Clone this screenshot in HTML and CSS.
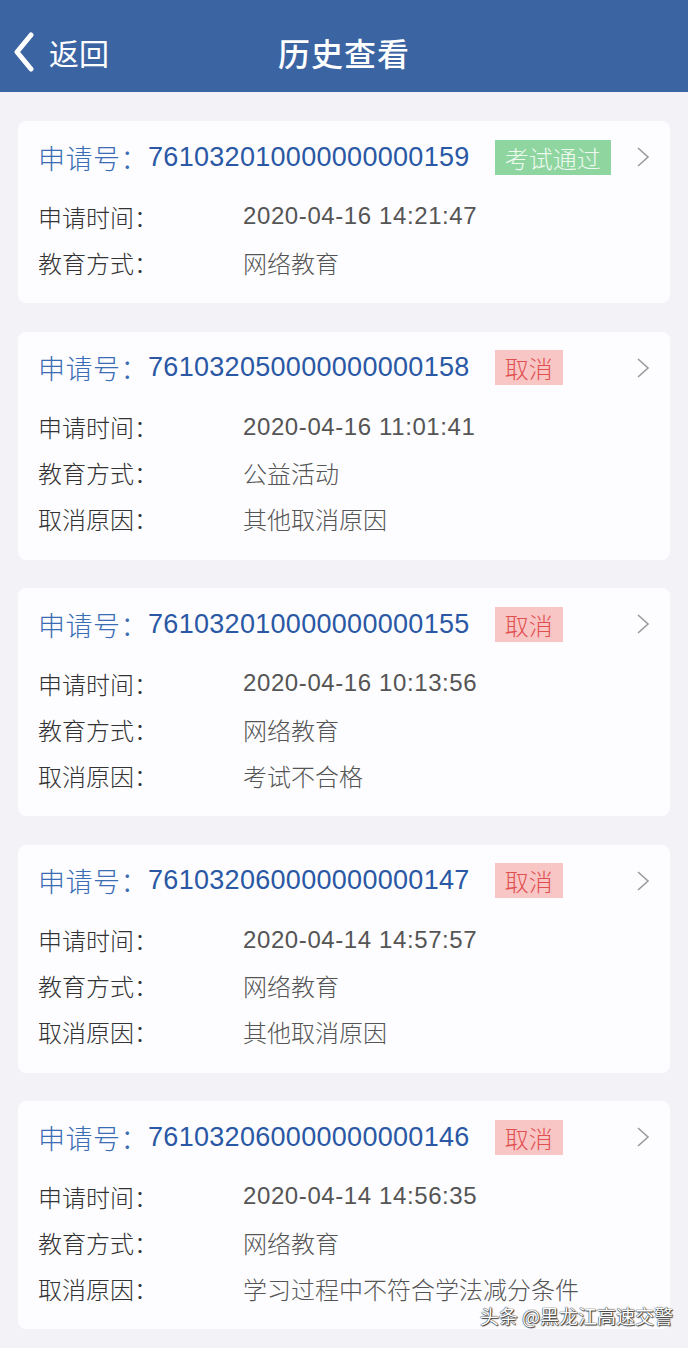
FILE: index.html
```html
<!DOCTYPE html>
<html>
<head>
    <meta charset="utf-8">
    <link rel="stylesheet" href="styles.css">
</head>
<body>
    <!-- Top bar -->
    <div class="topbar">
        <div class="back">
            <svg class="back-icon" width="22" height="40" viewBox="0 0 22 40">
                <polyline points="18,3 4,20 18,37" fill="none" stroke="#fff" stroke-width="5" stroke-linecap="round" stroke-linejoin="round" />
            </svg>
            <span>返回</span>
        </div>
        <div class="title">历史查看</div>
        <div></div>
    </div>

    <div class="list">
        <div class="card">
            <div class="card-head">
                <span class="label-no">申请号：</span><span class="number">761032010000000000159</span>
                <span class="badge pass">考试通过</span>
                <svg class="arrow" width="16" height="22" viewBox="0 0 16 22"><polyline points="3,2 13,11 3,20" fill="none" stroke="#9a9a9a" stroke-width="1.6" /></svg>
            </div>
            <div class="rows">
                <span class="key">申请时间：</span><span class="val num">2020-04-16 14:21:47</span>
                <span class="key">教育方式：</span><span class="val">网络教育</span>
            </div>
        </div>

        <div class="card">
            <div class="card-head">
                <span class="label-no">申请号：</span><span class="number">761032050000000000158</span>
                <span class="badge cancel">取消</span>
                <svg class="arrow" width="16" height="22" viewBox="0 0 16 22"><polyline points="3,2 13,11 3,20" fill="none" stroke="#9a9a9a" stroke-width="1.6" /></svg>
            </div>
            <div class="rows">
                <span class="key">申请时间：</span><span class="val num">2020-04-16 11:01:41</span>
                <span class="key">教育方式：</span><span class="val">公益活动</span>
                <span class="key">取消原因：</span><span class="val">其他取消原因</span>
            </div>
        </div>

        <div class="card">
            <div class="card-head">
                <span class="label-no">申请号：</span><span class="number">761032010000000000155</span>
                <span class="badge cancel">取消</span>
                <svg class="arrow" width="16" height="22" viewBox="0 0 16 22"><polyline points="3,2 13,11 3,20" fill="none" stroke="#9a9a9a" stroke-width="1.6" /></svg>
            </div>
            <div class="rows">
                <span class="key">申请时间：</span><span class="val num">2020-04-16 10:13:56</span>
                <span class="key">教育方式：</span><span class="val">网络教育</span>
                <span class="key">取消原因：</span><span class="val">考试不合格</span>
            </div>
        </div>

        <div class="card">
            <div class="card-head">
                <span class="label-no">申请号：</span><span class="number">761032060000000000147</span>
                <span class="badge cancel">取消</span>
                <svg class="arrow" width="16" height="22" viewBox="0 0 16 22"><polyline points="3,2 13,11 3,20" fill="none" stroke="#9a9a9a" stroke-width="1.6" /></svg>
            </div>
            <div class="rows">
                <span class="key">申请时间：</span><span class="val num">2020-04-14 14:57:57</span>
                <span class="key">教育方式：</span><span class="val">网络教育</span>
                <span class="key">取消原因：</span><span class="val">其他取消原因</span>
            </div>
        </div>

        <div class="card">
            <div class="card-head">
                <span class="label-no">申请号：</span><span class="number">761032060000000000146</span>
                <span class="badge cancel">取消</span>
                <svg class="arrow" width="16" height="22" viewBox="0 0 16 22"><polyline points="3,2 13,11 3,20" fill="none" stroke="#9a9a9a" stroke-width="1.6" /></svg>
            </div>
            <div class="rows">
                <span class="key">申请时间：</span><span class="val num">2020-04-14 14:56:35</span>
                <span class="key">教育方式：</span><span class="val">网络教育</span>
                <span class="key">取消原因：</span><span class="val">学习过程中不符合学法减分条件</span>
            </div>
        </div>
    </div>

    <!-- watermark over the last card -->
    <div class="watermark">头条 @黑龙江高速交警</div>
</body>
</html>
```

FILE: styles.css
```css
body {
    margin: 0;
    background: #f3f3f7;
    font-family: "Liberation Sans", "Noto Sans CJK SC", sans-serif;
    position: relative;
    min-height: 1348px;
}

.topbar {
    height: 92px;
    box-sizing: border-box;
    padding-top: 12px;
    background: #3b64a3;
    color: #fff;
    display: grid;
    grid-template-columns: 1fr auto 1fr;
    align-items: center;
}

.back {
    display: flex;
    align-items: center;
    padding-left: 13px;
    font-size: 30px;
    gap: 14px;
}

.back span {
    font-family: "Noto Sans CJK SC", sans-serif;
    line-height: 40px;
}

.title {
    font-family: "Noto Sans CJK SC", sans-serif;
    font-size: 32px;
    font-weight: 500;
    letter-spacing: 1px;
}

.list {
    padding: 29px 18px 0 18px;
    display: flex;
    flex-direction: column;
    gap: 28.5px;
}

.card {
    background: #fdfdff;
    border-radius: 8px;
    padding: 18px 19px 18px 20px;
}

.card-head {
    display: flex;
    align-items: center;
    height: 36px;
    font-size: 27px;
}

.label-no {
    color: #3b6db5;
    font-family: "Noto Sans CJK SC", sans-serif;
    font-size: 27px;
    font-weight: 300;
    letter-spacing: 0.5px;
}

.number {
    color: #2a58a4;
    letter-spacing: 0.3px;
}

.badge {
    margin-left: 25px;
    height: 35px;
    line-height: 35px;
    padding: 0 10px;
    font-family: "Noto Sans CJK SC", sans-serif;
    font-size: 24px;
    font-weight: 300;
}

.badge.pass {
    background: #8fd5a0;
    color: #eefaf0;
}

.badge.cancel {
    background: #f9c6c6;
    color: #e0504f;
}

.arrow {
    margin-left: auto;
}

.rows {
    margin-top: 18px;
    display: grid;
    grid-template-columns: 205px 1fr;
    grid-auto-rows: 46px;
    align-items: center;
    font-size: 24px;
}

.key {
    color: #333;
    font-family: "Noto Sans CJK SC", sans-serif;
    font-weight: 300;
}

.val {
    color: #555;
    font-family: "Noto Sans CJK SC", sans-serif;
    font-weight: 300;
}

.val.num {
    font-family: "Liberation Sans", sans-serif;
    font-weight: 400;
    letter-spacing: 0.6px;
}

.watermark {
    position: absolute;
    right: 15px;
    top: 1305px;
    line-height: 22px;
    font-family: "Noto Sans CJK SC", sans-serif;
    font-size: 19px;
    color: #fff;
    text-shadow: 0 0 1px #222, 0 0 1px #222, 1px 1px 1px #444;
}
```
